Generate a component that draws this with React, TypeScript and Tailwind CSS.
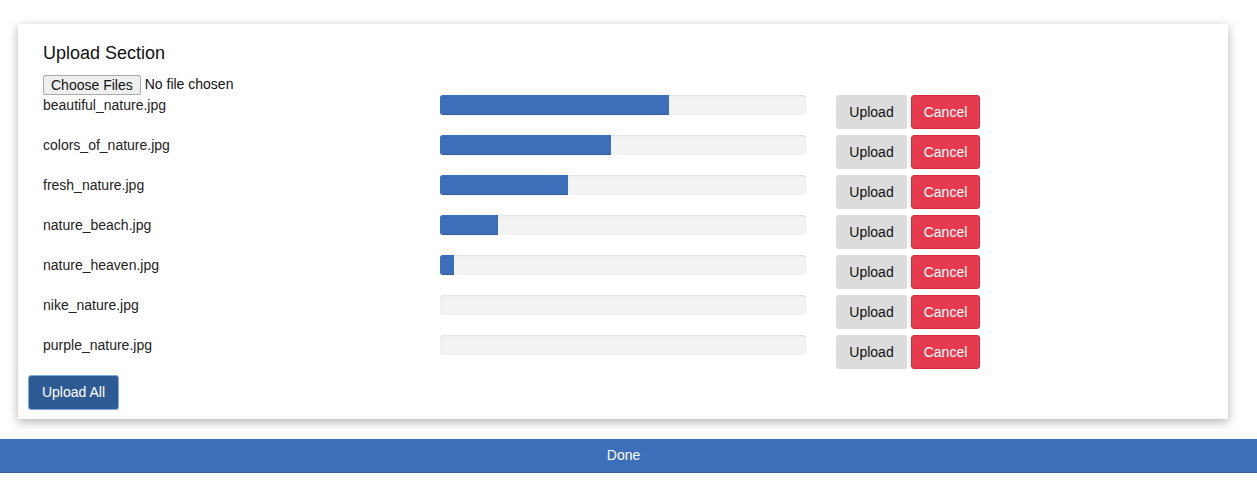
import { useState } from 'react';

const files = [
  { name: 'beautiful_nature.jpg', done: 229 },
  { name: 'colors_of_nature.jpg', done: 171 },
  { name: 'fresh_nature.jpg', done: 128 },
  { name: 'nature_beach.jpg', done: 58 },
  { name: 'nature_heaven.jpg', done: 14 },
  { name: 'nike_nature.jpg', done: 0 },
  { name: 'purple_nature.jpg', done: 0 },
];

export default function App() {
  const [items] = useState(files);

  return (
    <div className="min-h-[485px] bg-white pt-6 font-['Liberation_Sans',Arial,sans-serif] text-[14px] text-[#222]">
      {/* Card */}
      <div className="mx-[18px] w-[1210px] bg-white pb-[9px] pt-[17px] shadow-[0_3px_10px_rgba(0,0,0,0.3)]">
        <h2 className="pl-[25px] text-[18px] leading-[24px] text-[#111]">Upload Section</h2>
        <div className="mt-[9px] flex h-[21px] items-center pl-[25px]">
          <button className="h-[20px] rounded-[2px] border border-[#a9a9a9] bg-[#efefef] px-[7px] text-[14px] leading-[18px] text-[#111]">
            Choose Files
          </button>
          <span className="ml-[4px] text-[#111]">No file chosen</span>
        </div>

        <div className="flex flex-col">
          {items.map((f) => (
            <div key={f.name} className="flex h-[40px] pl-[25px]">
              <div className="w-[397px] leading-[18px] pt-[1px]">{f.name}</div>
              <div className="relative h-[20px] w-[366px] overflow-hidden rounded-[3px] bg-[#f3f3f3] shadow-[inset_0_1px_2px_rgba(0,0,0,0.08)]">
                <div className="h-full bg-[#3d6eb9] shadow-[inset_0_-1px_0_rgba(0,0,0,0.15)]" style={{ width: f.done }} />
              </div>
              <div className="ml-[30px] flex gap-[4px]">
                <button className="h-[34px] w-[71px] rounded-[3px] bg-[#dcdcdc] text-[14px] text-[#111]">Upload</button>
                <button className="h-[34px] w-[69px] rounded-[3px] border border-[#d6283e] bg-[#e63a4e] text-[14px] text-white">Cancel</button>
              </div>
            </div>
          ))}
        </div>

        <button className="ml-[10px] h-[35px] w-[91px] rounded-[3px] border border-[#7fa9de] bg-[#2f5b95] text-[14px] text-white">
          Upload All
        </button>
      </div>

      {/* Done bar */}
      <div className="mt-[20px] flex h-[34px] items-center justify-center border-b border-[#30609f] bg-[#3d6eb9] pr-[10px] text-[14px] text-white">
        Done
      </div>
    </div>
  );
}
